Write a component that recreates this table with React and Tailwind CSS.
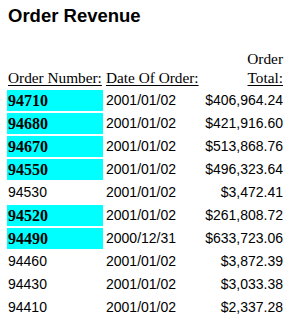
import React from "react";

const rows = [
  ["94710", "2001/01/02", "$406,964.24", true],
  ["94680", "2001/01/02", "$421,916.60", true],
  ["94670", "2001/01/02", "$513,868.76", true],
  ["94550", "2001/01/02", "$496,323.64", true],
  ["94530", "2001/01/02", "$3,472.41", false],
  ["94520", "2001/01/02", "$261,808.72", true],
  ["94490", "2000/12/31", "$633,723.06", true],
  ["94460", "2001/01/02", "$3,872.39", false],
  ["94430", "2001/01/02", "$3,033.38", false],
  ["94410", "2001/01/02", "$2,337.28", false],
];

export default function App() {
  return (
    <div className="w-[304px] h-[335px] bg-white text-black overflow-hidden">
      <div className="pl-[8px] pt-[5px] h-[47px] font-['Liberation_Sans',Arial,sans-serif] font-bold text-[18.5px] leading-[21px]">
        Order Revenue
      </div>
      <div className="pl-[5px]">
        <table className="table-fixed w-[281px] border-separate border-spacing-[2px] font-['Liberation_Serif','Times_New_Roman',serif] text-[16px]">
          <colgroup>
            <col className="w-[96px]" />
            <col className="w-[96px]" />
            <col className="w-[81px]" />
          </colgroup>
          <thead>
            <tr>
              <th className="p-[1px] font-normal text-[15.3px] text-left align-bottom leading-[18.5px] whitespace-nowrap">
                <span className="underline underline-offset-[2px]">Order Number:</span>
              </th>
              <th className="p-[1px] font-normal text-[15.3px] text-left align-bottom leading-[18.5px] whitespace-nowrap">
                <span className="underline underline-offset-[2px]">Date Of Order:</span>
              </th>
              <th className="p-[1px] font-normal text-[15.3px] text-right align-bottom leading-[18.5px] whitespace-nowrap">
                Order
                <br />
                <span className="underline underline-offset-[2px]">Total:</span>
              </th>
            </tr>
          </thead>
          <tbody>
            {rows.map(([num, date, total, hi]) => (
              <tr key={num}>
                <td
                  className={
                    hi
                      ? "h-[21px] p-[1px] bg-[#00ffff] font-bold text-[16px] font-['Liberation_Serif','Times_New_Roman',serif] leading-[19px] align-middle"
                      : "h-[21px] p-[1px] text-[14px] font-['Liberation_Sans',Arial,sans-serif] leading-[19px] align-middle"
                  }
                >
                  {num}
                </td>
                <td className="h-[21px] p-[1px] text-[14px] font-['Liberation_Sans',Arial,sans-serif] leading-[19px] align-middle whitespace-nowrap">
                  {date}
                </td>
                <td className="h-[21px] p-[1px] text-right text-[14px] font-['Liberation_Sans',Arial,sans-serif] leading-[19px] align-middle whitespace-nowrap">
                  {total}
                </td>
              </tr>
            ))}
          </tbody>
        </table>
      </div>
    </div>
  );
}
